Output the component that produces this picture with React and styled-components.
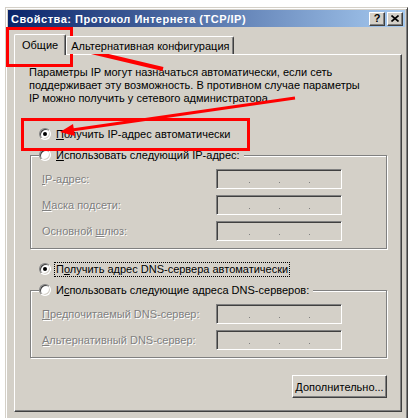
import React from "react";
import styled, { createGlobalStyle } from "styled-components";

const GlobalStyle = createGlobalStyle`
  html, body { margin: 0; padding: 0; background: #fff; }
  body { font-family: "Liberation Sans", Arial, sans-serif; font-size: 11px; color: #000; }
`;

const Page = styled.div`
  position: relative;
  width: 411px;
  height: 418px;
  overflow: hidden;
  box-sizing: border-box;
  padding: 7px 0 0 5px;
`;

const Window = styled.div`
  width: 403px;
  box-sizing: border-box;
  background: #d4d0c8;
  border: 1px solid;
  border-color: #d4d0c8 #404040 #404040 #d4d0c8;
  box-shadow: inset 1px 1px #fff, inset -1px -1px #808080;
  padding: 2px;
`;

const TitleBar = styled.div`
  height: 17px;
  display: flex;
  align-items: center;
  background: linear-gradient(to right, #0a246a, #a6caf0);
  padding: 0 2px 0 3px;
`;

const Title = styled.div`
  flex: 1;
  color: #fff;
  font-weight: bold;
  font-size: 11px;
  letter-spacing: 0.5px;
  white-space: nowrap;
`;

const CaptionButton = styled.div`
  width: 16px;
  height: 14px;
  box-sizing: border-box;
  background: #d4d0c8;
  border: 1px solid;
  border-color: #fff #404040 #404040 #fff;
  box-shadow: inset -1px -1px #808080;
  display: flex;
  align-items: center;
  justify-content: center;
  margin-left: ${(p) => p.$gap || 0}px;
  font-weight: bold;
  font-size: 11px;
  line-height: 1;
`;

const Body = styled.div`
  padding: 7px 3px 20px 6px;
`;

const TabStrip = styled.div`
  display: flex;
  align-items: flex-end;
`;

const Tab = styled.div`
  position: relative;
  z-index: ${(p) => (p.$active ? 2 : 1)};
  height: ${(p) => (p.$active ? 21 : 18)}px;
  margin-bottom: ${(p) => (p.$active ? -1 : 0)}px;
  padding: 0 ${(p) => (p.$active ? 7 : 4)}px;
  box-sizing: border-box;
  display: flex;
  align-items: center;
  background: #d4d0c8;
  border: 1px solid;
  border-bottom: none;
  border-color: #fff #404040 #404040 #fff;
  border-radius: 2px 2px 0 0;
  box-shadow: inset -1px 0 #808080;
  white-space: nowrap;
`;

const Panel = styled.div`
  border: 1px solid;
  border-color: #fff #404040 #404040 #fff;
  box-shadow: inset -1px -1px #808080;
  padding: 11px 14px 13px 15px;
`;

const Intro = styled.p`
  margin: 0 0 0 -1px;
  line-height: 13px;
  white-space: nowrap;
`;

const RadioRow = styled.div`
  display: flex;
  align-items: center;
  height: 14px;
  gap: 4px;
  margin: ${(p) => p.$top || 0}px 0 0 ${(p) => (p.$inLegend ? 0 : 9)}px;
`;

const Radio = styled.span`
  width: 12px;
  height: 12px;
  box-sizing: border-box;
  flex-shrink: 0;
  border-radius: 50%;
  border: 1px solid;
  border-color: #808080 #fff #fff #808080;
  box-shadow: inset 1px 1px #404040, inset -1px -1px #d4d0c8;
  background: #fff;
  display: flex;
  align-items: center;
  justify-content: center;

  &::after {
    content: "";
    display: ${(p) => (p.$checked ? "block" : "none")};
    width: 4px;
    height: 4px;
    border-radius: 50%;
    background: #000;
  }
`;

const RadioLabel = styled.span`
  padding: 0 1px;
  line-height: 13px;
  white-space: nowrap;
  outline: ${(p) => (p.$focused ? "1px dotted #000" : "none")};
`;

const U = styled.span`
  text-decoration: underline;
`;

const Group = styled.fieldset`
  margin: ${(p) => p.$top || 0}px 0 0;
  padding: 7px 0 7px 0;
  min-width: 0;
  border: 1px solid #808080;
  box-shadow: 1px 1px #fff, inset 1px 1px #fff;
`;

const Legend = styled.legend`
  margin-left: 8px;
  padding: 0 3px 0 0;
  background: #d4d0c8;
`;

const FieldRow = styled.div`
  display: flex;
  align-items: center;
  height: 20px;
  padding-left: 11px;

  & + & {
    margin-top: 6px;
  }
`;

const FieldLabel = styled.span`
  width: 174px;
  flex-shrink: 0;
  color: #808080;
  text-shadow: 1px 1px #fff;
  white-space: nowrap;
`;

const IpBox = styled.div`
  width: 126px;
  height: 20px;
  box-sizing: border-box;
  border: 1px solid;
  border-color: #808080 #fff #fff #808080;
  box-shadow: inset 1px 1px #404040, inset -1px -1px #d4d0c8;
  background: #d4d0c8;
  display: flex;
  align-items: flex-end;
  gap: 29px;
  padding: 0 0 5px 32px;
`;

const Dot = styled.span`
  width: 1px;
  height: 1px;
  background: #808080;
`;

const ButtonRow = styled.div`
  display: flex;
  justify-content: flex-end;
  margin-top: 17px;
`;

const Button = styled.button`
  width: 95px;
  height: 23px;
  padding: 0;
  font: 11px "Liberation Sans", Arial, sans-serif;
  color: #000;
  background: #d4d0c8;
  border: 1px solid;
  border-color: #fff #404040 #404040 #fff;
  box-shadow: inset -1px -1px #808080;
`;

const Overlay = styled.svg`
  position: absolute;
  left: 0;
  top: 0;
  pointer-events: none;
`;

const IpField = ({ label }) => (
  <FieldRow>
    <FieldLabel>{label}</FieldLabel>
    <IpBox>
      <Dot />
      <Dot />
      <Dot />
    </IpBox>
  </FieldRow>
);

const App = () => (
  <Page>
    <GlobalStyle />
    <Window>
      <TitleBar>
        <Title>Свойства: Протокол Интернета (TCP/IP)</Title>
        <CaptionButton>?</CaptionButton>
        <CaptionButton $gap={2}>
          <svg width="8" height="7" viewBox="0 0 8 7">
            <path d="M0.5 0.5 L7.5 6.5 M7.5 0.5 L0.5 6.5" stroke="#000" strokeWidth="1.6" />
          </svg>
        </CaptionButton>
      </TitleBar>
      <Body>
        <TabStrip>
          <Tab $active>Общие</Tab>
          <Tab>Альтернативная конфигурация</Tab>
        </TabStrip>
        <Panel>
          <Intro>
            Параметры IP могут назначаться автоматически, если сеть
            <br />
            поддерживает эту возможность. В противном случае параметры
            <br />
            IP можно получить у сетевого администратора.
          </Intro>
          <RadioRow $top={22}>
            <Radio $checked />
            <RadioLabel>
              <U>П</U>олучить IP-адрес автоматически
            </RadioLabel>
          </RadioRow>
          <Group $top={7}>
            <Legend>
              <RadioRow $inLegend>
                <Radio />
                <RadioLabel>
                  <U>И</U>спользовать следующий IP-адрес:
                </RadioLabel>
              </RadioRow>
            </Legend>
            <IpField label={<><U>I</U>P-адрес:</>} />
            <IpField label={<><U>М</U>аска подсети:</>} />
            <IpField label={<>Основной <U>ш</U>люз:</>} />
          </Group>
          <RadioRow $top={13}>
            <Radio $checked />
            <RadioLabel $focused>
              П<U>о</U>лучить адрес DNS-сервера автоматически
            </RadioLabel>
          </RadioRow>
          <Group $top={7}>
            <Legend>
              <RadioRow $inLegend>
                <Radio />
                <RadioLabel>
                  И<U>с</U>пользовать следующие адреса DNS-серверов:
                </RadioLabel>
              </RadioRow>
            </Legend>
            <IpField label={<><U>П</U>редпочитаемый DNS-сервер:</>} />
            <IpField label={<><U>А</U>льтернативный DNS-сервер:</>} />
          </Group>
          <ButtonRow>
            <Button>
              <U>Д</U>ополнительно...
            </Button>
          </ButtonRow>
        </Panel>
      </Body>
    </Window>
    <Overlay width="411" height="418" viewBox="0 0 411 418">
      <rect x="7.5" y="28.5" width="64" height="37" fill="none" stroke="#ff0000" strokeWidth="3" />
      <rect x="22.5" y="119.5" width="226" height="30" fill="none" stroke="#ff0000" strokeWidth="3" />
      <line x1="163" y1="69" x2="66" y2="46" stroke="#ff0000" strokeWidth="4" />
      <polygon points="55,43 70,40.5 67,52" fill="#ff0000" />
      <line x1="295" y1="98" x2="72" y2="130" stroke="#ff0000" strokeWidth="3" />
      <polygon points="60,132 75,136 73,124" fill="#ff0000" />
    </Overlay>
  </Page>
);

export default App;
